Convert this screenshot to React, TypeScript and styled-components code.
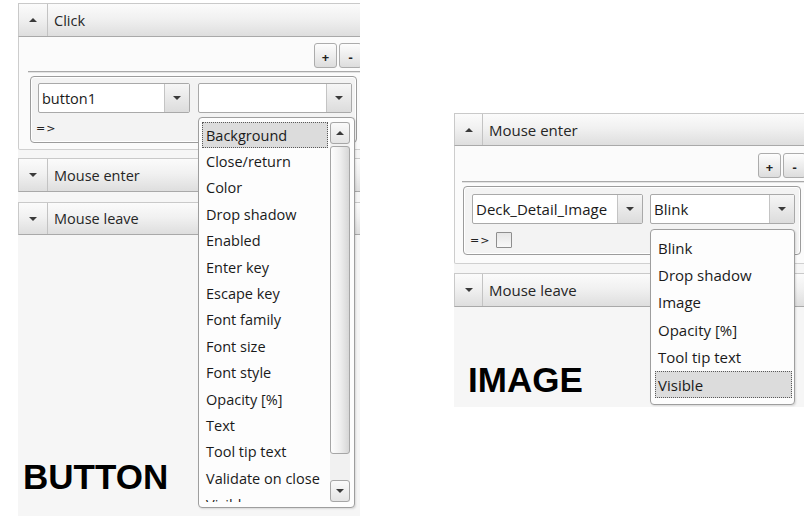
import React from "react";
import styled, { createGlobalStyle } from "styled-components";

const Global = createGlobalStyle`
  html, body { margin: 0; padding: 0; background: #ffffff; }
  body { font-family: "Open Sans", "Noto Sans", sans-serif; color: #1b1b1b; }
  #root { width: 804px; height: 518px; overflow: hidden; }
`;

const Page = styled.div`
  display: flex;
  align-items: flex-start;
  gap: 94px;
  padding: 3px 0 0 18px;
  width: 804px;
  height: 518px;
  box-sizing: border-box;
  overflow: hidden;
`;

const Panel = styled.div<{ $w: number; $h: number; $top: number; $fs: number }>`
  position: relative;
  flex-shrink: 0;
  width: ${(p) => p.$w}px;
  height: ${(p) => p.$h}px;
  margin-top: ${(p) => p.$top}px;
  background: #f6f6f6;
  overflow: hidden;
  display: flex;
  flex-direction: column;
  font-size: ${(p) => p.$fs}px;
`;

const Header = styled.div<{ $h: number; $gap: number }>`
  display: flex;
  flex-shrink: 0;
  height: ${(p) => p.$h}px;
  margin-top: ${(p) => p.$gap}px;
  box-sizing: border-box;
  border: 1px solid #c9c9c9;
  border-right: none;
  border-bottom-color: #a9a9a9;
  background: linear-gradient(#fbfbfb, #f1f1f1 45%, #dedede);
`;

const ToggleCell = styled.div<{ $w: number }>`
  width: ${(p) => p.$w}px;
  flex-shrink: 0;
  border-right: 1px solid #c3c3c3;
  display: flex;
  align-items: center;
  justify-content: center;
`;

const Arrow = styled.span<{ $up: boolean }>`
  width: 0;
  height: 0;
  border-left: 4px solid transparent;
  border-right: 4px solid transparent;
  ${(p) => (p.$up ? "border-bottom: 4px solid #3a3a3a;" : "border-top: 4px solid #3a3a3a;")}
`;

const Title = styled.div`
  display: flex;
  align-items: center;
  padding-left: 6px;
  color: #262626;
`;

const Content = styled.div<{ $pt: number; $pb: number; $pl: number }>`
  position: relative;
  z-index: 2;
  flex-shrink: 0;
  display: flex;
  flex-direction: column;
  padding: ${(p) => p.$pt}px 0 ${(p) => p.$pb}px ${(p) => p.$pl}px;
  background: #fbfbfb;
  border-left: 1px solid #cdcdcd;
  border-bottom: 1px solid #d0d0d0;
  border-bottom-left-radius: 2px;
`;

const ButtonRow = styled.div`
  display: flex;
  justify-content: flex-end;
  gap: 2px;
  margin-right: -2px;
`;

const SmallButton = styled.div`
  width: 23px;
  height: 25px;
  box-sizing: border-box;
  border: 1px solid #acacac;
  border-radius: 3px;
  background: linear-gradient(#fdfdfd, #ececec 55%, #dddddd);
  display: flex;
  align-items: flex-end;
  justify-content: center;
  padding-bottom: 3px;
  font-size: 13px;
  font-weight: 700;
  line-height: 1;
  color: #222;
`;

const Divider = styled.div`
  margin-top: 3px;
  height: 0;
  border-top: 1px solid #a9a9a9;
  border-bottom: 1px solid #e3e3e3;
`;

const RuleBox = styled.div<{ $h: number; $ml: number; $pl: number; $pt: number }>`
  margin: 3px 3px 0 ${(p) => p.$ml}px;
  height: ${(p) => p.$h}px;
  box-sizing: border-box;
  padding: ${(p) => p.$pt}px 0 0 ${(p) => p.$pl}px;
  border: 1px solid #9c9c9c;
  border-radius: 4px;
  box-shadow: inset 0 0 0 1px #ffffff;
  background: #f3f3f3;
  display: flex;
  flex-direction: column;
`;

const ComboRow = styled.div<{ $gap: number }>`
  display: flex;
  gap: ${(p) => p.$gap}px;
`;

const ComboWrap = styled.div<{ $w: number }>`
  position: relative;
  width: ${(p) => p.$w}px;
  flex-shrink: 0;
`;

const Combo = styled.div`
  display: flex;
  height: 30px;
  box-sizing: border-box;
  border: 1px solid #a9a9a9;
  border-radius: 2px;
  background: #ffffff;
`;

const ComboText = styled.div`
  flex: 1;
  display: flex;
  align-items: center;
  padding-left: 3px;
  white-space: nowrap;
  overflow: hidden;
  color: #1a1a1a;
`;

const ComboButton = styled.div`
  width: 24px;
  flex-shrink: 0;
  border-left: 1px solid #c4c4c4;
  background: linear-gradient(#f6f6f6, #e9e9e9 50%, #dcdcdc);
  display: flex;
  align-items: center;
  justify-content: center;
`;

const ResultRow = styled.div<{ $mt: number }>`
  display: flex;
  align-items: center;
  gap: 6px;
  height: 18px;
  margin-top: ${(p) => p.$mt}px;
  margin-left: -2px;
`;

const ArrowText = styled.span`
  font-family: "DejaVu Sans", sans-serif;
  font-size: 11px;
  letter-spacing: 1px;
  color: #222;
`;

const CheckBox = styled.div`
  width: 16px;
  height: 16px;
  box-sizing: border-box;
  border: 1px solid #8e8e8e;
  border-radius: 1px;
  background: linear-gradient(#e6e6e6, #f8f8f8);
`;

const DropList = styled.div<{ $w: number; $h: number; $off: number; $p: string }>`
  position: absolute;
  z-index: 10;
  left: 0;
  top: calc(100% + ${(p) => p.$off}px);
  width: ${(p) => p.$w}px;
  height: ${(p) => p.$h}px;
  box-sizing: border-box;
  padding: ${(p) => p.$p};
  border: 1px solid #9e9e9e;
  border-radius: 4px;
  background: #fdfdfd;
  box-shadow: 1px 1px 2px rgba(0, 0, 0, 0.12);
  display: flex;
`;

const Items = styled.div`
  flex: 1;
  overflow: hidden;
  display: flex;
  flex-direction: column;
`;

const Item = styled.div<{ $h: number; $sel: boolean; $pl: number }>`
  flex-shrink: 0;
  height: ${(p) => p.$h}px;
  box-sizing: border-box;
  display: flex;
  align-items: center;
  padding-left: ${(p) => p.$pl}px;
  white-space: nowrap;
  color: #1a1a1a;
  border: 1px ${(p) => (p.$sel ? "dotted #5a5a5a" : "solid transparent")};
  background: ${(p) => (p.$sel ? "#dcdcdc" : "transparent")};
`;

const ScrollBar = styled.div`
  width: 20px;
  margin-left: 2px;
  flex-shrink: 0;
  display: flex;
  flex-direction: column;
  background: #f1f1f1;
`;

const ScrollButton = styled.div`
  height: 22px;
  flex-shrink: 0;
  box-sizing: border-box;
  border: 1px solid #a6a6a6;
  border-radius: 3px;
  background: linear-gradient(#fafafa, #e4e4e4);
  display: flex;
  align-items: center;
  justify-content: center;
`;

const Thumb = styled.div<{ $h: number }>`
  height: ${(p) => p.$h}px;
  margin-top: 2px;
  flex-shrink: 0;
  box-sizing: border-box;
  border: 1px solid #a6a6a6;
  border-radius: 3px;
  background: linear-gradient(to right, #fdfdfd, #efefef 50%, #d6d6d6);
`;

const Spacer = styled.div`
  flex: 1;
`;

const Label = styled.div<{ $ml: number; $mb: number }>`
  margin-top: auto;
  margin-left: ${(p) => p.$ml}px;
  margin-bottom: ${(p) => p.$mb}px;
  font-family: "Liberation Sans", Arial, sans-serif;
  font-weight: 700;
  font-size: 35px;
  line-height: 35px;
  color: #000;
`;

const buttonProps = [
  "Background",
  "Close/return",
  "Color",
  "Drop shadow",
  "Enabled",
  "Enter key",
  "Escape key",
  "Font family",
  "Font size",
  "Font style",
  "Opacity [%]",
  "Text",
  "Tool tip text",
  "Validate on close",
  "Visible",
];

const imageProps = ["Blink", "Drop shadow", "Image", "Opacity [%]", "Tool tip text", "Visible"];

const SectionHeader: React.FC<{ title: string; up: boolean; h: number; gap: number; cell: number }> = ({
  title,
  up,
  h,
  gap,
  cell,
}) => (
  <Header $h={h} $gap={gap}>
    <ToggleCell $w={cell}>
      <Arrow $up={up} />
    </ToggleCell>
    <Title>{title}</Title>
  </Header>
);

export default function App() {
  return (
    <>
      <Global />
      <Page>
        <Panel $w={342} $h={513} $top={0} $fs={14.5}>
          <SectionHeader title="Click" up h={34} gap={0} cell={28} />
          <Content $pt={6} $pb={6} $pl={9}>
            <ButtonRow>
              <SmallButton>+</SmallButton>
              <SmallButton>-</SmallButton>
            </ButtonRow>
            <Divider />
            <RuleBox $h={67} $ml={2} $pl={7} $pt={6}>
              <ComboRow $gap={8}>
                <ComboWrap $w={152}>
                  <Combo>
                    <ComboText>button1</ComboText>
                    <ComboButton>
                      <Arrow $up={false} />
                    </ComboButton>
                  </Combo>
                </ComboWrap>
                <ComboWrap $w={154}>
                  <Combo>
                    <ComboText />
                    <ComboButton>
                      <Arrow $up={false} />
                    </ComboButton>
                  </Combo>
                  <DropList $w={157} $h={391} $off={4} $p="4px 4px 5px 3px">
                    <Items>
                      {buttonProps.map((t, i) => (
                        <Item key={t} $h={26.4} $sel={i === 0} $pl={3}>
                          {t}
                        </Item>
                      ))}
                    </Items>
                    <ScrollBar>
                      <ScrollButton>
                        <Arrow $up />
                      </ScrollButton>
                      <Thumb $h={308} />
                      <Spacer />
                      <ScrollButton>
                        <Arrow $up={false} />
                      </ScrollButton>
                    </ScrollBar>
                  </DropList>
                </ComboWrap>
              </ComboRow>
              <ResultRow $mt={6}>
                <ArrowText>=&gt;</ArrowText>
              </ResultRow>
            </RuleBox>
          </Content>
          <SectionHeader title="Mouse enter" up={false} h={34} gap={8} cell={28} />
          <SectionHeader title="Mouse leave" up={false} h={33} gap={10} cell={28} />
          <Label $ml={5} $mb={22}>BUTTON</Label>
        </Panel>

        <Panel $w={350} $h={294} $top={110} $fs={15}>
          <SectionHeader title="Mouse enter" up h={33} gap={0} cell={27} />
          <Content $pt={7} $pb={8} $pl={7}>
            <ButtonRow>
              <SmallButton>+</SmallButton>
              <SmallButton>-</SmallButton>
            </ButtonRow>
            <Divider />
            <RuleBox $h={69} $ml={1} $pl={8} $pt={7}>
              <ComboRow $gap={7}>
                <ComboWrap $w={171}>
                  <Combo>
                    <ComboText>Deck_Detail_Image</ComboText>
                    <ComboButton>
                      <Arrow $up={false} />
                    </ComboButton>
                  </Combo>
                </ComboWrap>
                <ComboWrap $w={145}>
                  <Combo>
                    <ComboText>Blink</ComboText>
                    <ComboButton>
                      <Arrow $up={false} />
                    </ComboButton>
                  </Combo>
                  <DropList $w={145} $h={176} $off={5} $p="4px 2px 5px 4px">
                    <Items>
                      {imageProps.map((t, i) => (
                        <Item key={t} $h={27.4} $sel={i === imageProps.length - 1} $pl={2}>
                          {t}
                        </Item>
                      ))}
                    </Items>
                  </DropList>
                </ComboWrap>
              </ComboRow>
              <ResultRow $mt={7}>
                <ArrowText>=&gt;</ArrowText>
                <CheckBox />
              </ResultRow>
            </RuleBox>
          </Content>
          <SectionHeader title="Mouse leave" up={false} h={34} gap={9} cell={27} />
          <Label $ml={14} $mb={10}>IMAGE</Label>
        </Panel>
      </Page>
    </>
  );
}
